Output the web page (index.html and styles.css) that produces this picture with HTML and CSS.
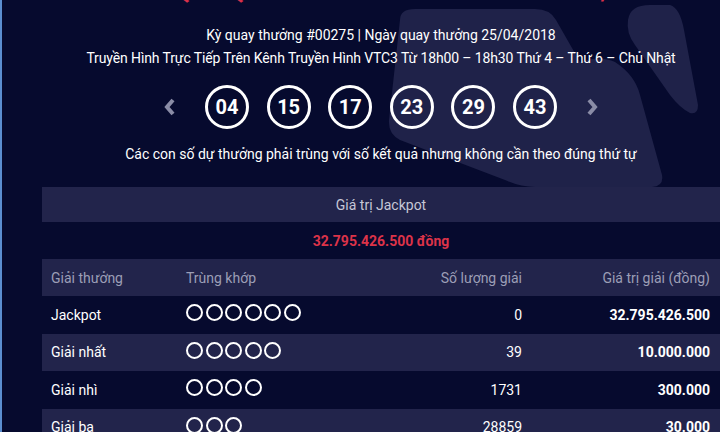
FILE: index.html
```html
<!DOCTYPE html>
<html lang="vi">
<head>
<meta charset="utf-8">
<title>Kết quả Mega 6/45</title>
<link rel="stylesheet" href="styles.css">
</head>
<body>
<svg class="deco" width="720" height="432" viewBox="0 0 720 432" aria-hidden="true">
  <path d="M 400 20 Q 400 9 415 9 L 535 9 Q 550 9 556 20 L 580 62 Q 600 55 615 62 Q 635 75 640 95 L 662 175 Q 664 186 652 187 L 535 187 Q 520 187 505 180 L 400 140 Q 388 134 389 120 Z" />
  <path d="M 628 20 Q 630 5 650 5 L 670 5 Q 680 8 684 30 L 698 105 Q 698 115 690 113 Q 680 108 670 95 L 635 45 Q 626 33 628 20 Z" />
</svg>
<main class="page">
  <h1 class="title">KẾT QUẢ QUAY THƯỞNG VIETLOTT MEGA 6/45</h1>
  <p class="info info-draw">Kỳ quay thưởng #00275 | Ngày quay thưởng 25/04/2018</p>
  <p class="info info-tv">Truyền Hình Trực Tiếp Trên Kênh Truyền Hình VTC3 Từ 18h00 – 18h30 Thứ 4 – Thứ 6 – Chủ Nhật</p>
  <div class="balls-row">
    <svg class="arrow" width="14" height="18" viewBox="0 0 14 18"><polyline points="10,2 4,9 10,16" /></svg>
    <div class="balls">
      <span class="ball">04</span>
      <span class="ball">15</span>
      <span class="ball">17</span>
      <span class="ball">23</span>
      <span class="ball">29</span>
      <span class="ball">43</span>
    </div>
    <svg class="arrow" width="14" height="18" viewBox="0 0 14 18"><polyline points="4,2 10,9 4,16" /></svg>
  </div>
  <p class="note">Các con số dự thưởng phải trùng với số kết quả nhưng không cần theo đúng thứ tự</p>

  <section class="results">
    <div class="jp-title">Giá trị Jackpot</div>
    <div class="jp-amount">32.795.426.500 đồng</div>
    <div class="row row-head">
      <span>Giải thưởng</span>
      <span>Trùng khớp</span>
      <span class="num">Số lượng giải</span>
      <span class="num">Giá trị giải (đồng)</span>
    </div>
    <div class="row">
      <span>Jackpot</span>
      <span class="dots"><i></i><i></i><i></i><i></i><i></i><i></i></span>
      <span class="num">0</span>
      <span class="num val">32.795.426.500</span>
    </div>
    <div class="row row-alt">
      <span>Giải nhất</span>
      <span class="dots"><i></i><i></i><i></i><i></i><i></i></span>
      <span class="num">39</span>
      <span class="num val">10.000.000</span>
    </div>
    <div class="row">
      <span>Giải nhì</span>
      <span class="dots"><i></i><i></i><i></i><i></i></span>
      <span class="num">1731</span>
      <span class="num val">300.000</span>
    </div>
    <div class="row row-alt">
      <span>Giải ba</span>
      <span class="dots"><i></i><i></i><i></i></span>
      <span class="num">28859</span>
      <span class="num val">30.000</span>
    </div>
  </section>
</main>
</body>
</html>
```

FILE: styles.css
```css
* { box-sizing: border-box; }

html, body {
  margin: 0;
  height: 100%;
}

body {
  background: #060a2e;
  border-left: 2px solid #5b8ed0;
  font-family: Roboto, "Noto Sans", sans-serif;
  color: #ffffff;
  overflow: hidden;
  position: relative;
}

.deco {
  position: absolute;
  top: 0;
  left: -2px;
  z-index: 0;
}
.deco path { fill: #1f2249; }

.page {
  position: relative;
  z-index: 1;
  width: 678px;
  margin-left: 40px;
  display: flex;
  flex-direction: column;
  align-items: center;
}

.title {
  margin: -20px 0 0;
  height: 24px;
  line-height: 24px;
  font-size: 24px;
  font-weight: 700;
  color: #d8304a;
  white-space: nowrap;
}

.info {
  margin: 0;
  font-size: 14px;
  line-height: 23px;
  white-space: nowrap;
}
.info-draw { margin-top: 20px; }
.info-tv { letter-spacing: -0.12px; }

.balls-row {
  display: flex;
  align-items: center;
  gap: 28px;
  margin-top: 15px;
}

.arrow polyline {
  fill: none;
  stroke: #8a8ca6;
  stroke-width: 4;
  stroke-linecap: butt;
  stroke-linejoin: miter;
}

.balls {
  display: flex;
  gap: 17.6px;
}

.ball {
  width: 44px;
  height: 44px;
  border: 3px solid #ffffff;
  border-radius: 50%;
  display: flex;
  align-items: center;
  justify-content: center;
  font-size: 20px;
  font-weight: 700;
}

.note {
  margin: 15px 0 0;
  font-size: 14px;
  line-height: 20px;
  white-space: nowrap;
}

.results {
  align-self: stretch;
  margin-top: 23px;
}

.jp-title {
  height: 35px;
  background: #22244b;
  display: flex;
  align-items: center;
  justify-content: center;
  font-size: 14px;
  color: #c6c7d6;
}

.jp-amount {
  height: 37px;
  display: flex;
  align-items: center;
  justify-content: center;
  font-size: 14px;
  font-weight: 700;
  color: #dc3349;
}

.row {
  height: 37.5px;
  display: grid;
  grid-template-columns: 135px 194px 142px 188px;
  padding: 0 10px 0 9px;
  align-items: center;
  font-size: 14px;
}
.row-head {
  height: 37px;
  background: #22244b;
  color: #9c9eb6;
}
.row-alt { background: #22244b; }

.row .num { text-align: right; }
.row .val { font-weight: 700; }

.dots {
  display: flex;
  gap: 2.5px;
  margin-top: -4px;
}
.dots i {
  width: 17px;
  height: 17px;
  border: 2px solid #ffffff;
  border-radius: 50%;
}
```
